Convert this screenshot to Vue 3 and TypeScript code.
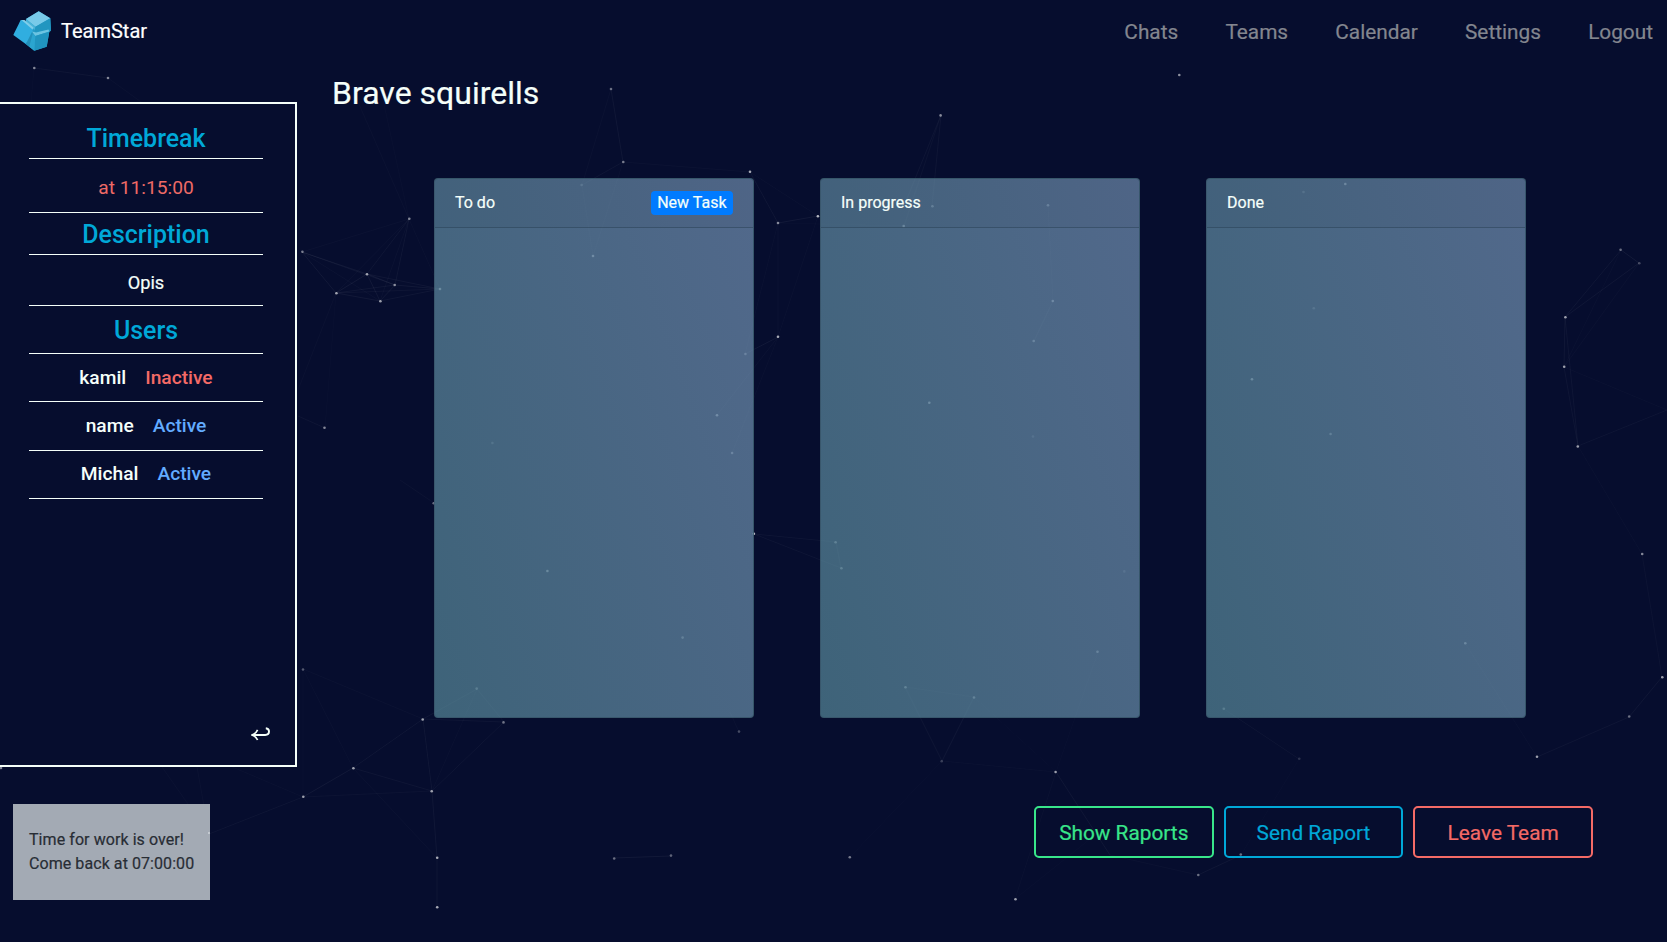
<script setup lang="ts">
interface Dot { x: number; y: number; o: number }
interface Member { name: string; status: 'Active' | 'Inactive' }

const links: string[] = ['Chats', 'Teams', 'Calendar', 'Settings', 'Logout']
const members: Member[] = [
  { name: 'kamil', status: 'Inactive' },
  { name: 'name', status: 'Active' },
  { name: 'Michal', status: 'Active' },
]
const columns = [
  { title: 'To do', canAdd: true },
  { title: 'In progress', canAdd: false },
  { title: 'Done', canAdd: false },
]

// Particle field: x, y, opacity
const dots: Dot[] = ([
  [34.3, 68, .5], [108, 78, .5], [303, 669.5, .3], [303.3, 796.7, .6], [1, 768, .5],
  [1179.3, 75, .55], [1048, 205.3, .4], [1345.3, 184, .5], [1303.5, 192, .2], [611, 89, .4], [623.3, 162, .45],
  [750, 171.7, .65], [409.3, 218.7, .5], [302.4, 251.7, .45], [367, 274.2, .6], [394.7, 285, .5], [336.4, 293.2, .6],
  [380.4, 301.2, .6], [440, 289, .5], [593, 256, .5], [581.6, 185, .25], [778, 223, .5], [778, 336.7, .65],
  [940.6, 115.4, .5], [817.9, 216.3, .7], [932.4, 206.3, .4], [903.7, 226, .5], [1052.8, 301, .45], [1033.7, 341, .4],
  [745.4, 354, .35], [717, 415.3, .5], [732.1, 453, .4], [492.4, 443, .2], [433.7, 503.3, .4], [753.9, 533.7, .7],
  [835.6, 542.2, .4], [841.4, 568.3, .4], [547.4, 571, .5], [682.6, 637.6, .35], [476.7, 688.6, .35], [422.7, 719.5, .6],
  [503.5, 722.4, .4], [353.4, 768.2, .6], [431.7, 791.2, .6], [437.2, 857.7, .65], [437.2, 907.2, .65], [614.2, 858.5, .4],
  [671, 855.6, .35], [849.8, 857.2, .45], [739, 731.6, .25], [941.7, 761.3, .2], [905.5, 687.2, .4], [974, 697.5, .4],
  [1055.6, 772, .6], [1198.3, 875, .4], [1240.8, 854.5, .4], [1015.5, 899.3, .6], [1299.3, 758.8, .15], [1537, 756.7, .6],
  [1629.2, 716.5, .4], [1223.8, 708.7, .35], [1620.6, 249.7, .4], [1639.3, 263.3, .25], [1565.4, 317.2, .6], [1564.2, 366.7, .6],
  [1577.8, 446.5, .6], [1642.2, 554, .5], [1662.3, 677.2, .6], [1313.8, 308.2, .2], [1252, 379.3, .5], [1330.6, 434, .35],
  [1465.3, 643.2, .45], [1124.3, 571.4, .15], [324.5, 427.7, .5], [929.3, 402.8, .5], [1097.5, 651.7, .4], [1033, 436.5, .15],
] as number[][]).map(([x, y, o]) => ({ x, y, o }))

// Links between nearby particles: x1, y1, x2, y2, opacity
const lines: number[][] = [
  [34, 68, 108, 78, .05], [108, 78, 155, 112, .03], [34, 68, 31, 102, .02],
  [611, 89, 623, 162, .06], [611, 89, 582, 185, .03], [623, 162, 582, 185, .05], [623, 162, 750, 172, .03], [623, 162, 593, 256, .03], [582, 185, 593, 256, .03],
  [750, 172, 778, 223, .06], [750, 172, 818, 216, .03], [778, 223, 818, 216, .07], [778, 223, 904, 226, .02],
  [778, 223, 778, 337, .03], [778, 223, 745, 354, .03], [818, 216, 778, 337, .03], [778, 337, 745, 354, .07], [778, 337, 717, 415, .04], [778, 337, 732, 453, .03],
  [409, 219, 355, 95, .03], [409, 219, 382, 95, .025], [409, 219, 302, 252, .03], [409, 219, 367, 274, .06], [409, 219, 395, 285, .06],
  [409, 219, 336, 293, .04], [409, 219, 380, 301, .04], [409, 219, 440, 289, .03],
  [302, 252, 367, 274, .07], [302, 252, 395, 285, .05], [302, 252, 336, 293, .07], [302, 252, 380, 301, .04],
  [367, 274, 336, 293, .08], [367, 274, 395, 285, .08], [367, 274, 380, 301, .07], [367, 274, 440, 289, .06],
  [395, 285, 336, 293, .06], [395, 285, 380, 301, .07], [395, 285, 440, 289, .07], [336, 293, 380, 301, .07],
  [336, 293, 440, 289, .05], [380, 301, 440, 289, .06], [336, 293, 298, 390, .03], [336, 293, 325, 428, .02],
  [298, 416, 325, 428, .05], [400, 480, 434, 503, .04],
  [941, 115, 904, 206, .05], [941, 115, 904, 226, .04], [941, 115, 932, 206, .05], [1048, 205, 1053, 301, .03], [1053, 301, 1034, 341, .06],
  [754, 534, 836, 542, .05], [754, 534, 841, 568, .05], [836, 542, 841, 568, .06],
  [303, 669, 423, 719, .03], [303, 669, 353, 768, .03], [303, 669, 303, 797, .025],
  [423, 719, 353, 768, .06], [423, 719, 432, 791, .06], [423, 719, 504, 722, .05], [423, 719, 477, 689, .06], [504, 722, 432, 791, .05], [504, 722, 477, 689, .05],
  [477, 689, 432, 791, .03], [353, 768, 303, 797, .07], [353, 768, 432, 791, .05], [303, 797, 432, 791, .04],
  [432, 791, 437, 858, .06], [353, 768, 437, 858, .03], [437, 858, 437, 907, .06],
  [303, 797, 209, 834, .05], [303, 797, 230, 766, .03], [162, 767, 209, 834, .03], [197, 767, 209, 834, .03],
  [614, 858, 671, 856, .07], [739, 732, 730, 712, .03], [905, 687, 942, 761, .05], [974, 697, 942, 761, .06], [905, 687, 974, 697, .03], [942, 761, 850, 857, .025], [942, 761, 1056, 772, .03],
  [1056, 772, 1098, 652, .025], [1056, 772, 974, 697, .02], [1056, 772, 1110, 855, .06], [1056, 772, 1015, 899, .03],
  [1110, 855, 1198, 875, .03], [1198, 875, 1241, 855, .06], [1015, 899, 1110, 823, .025], [1241, 855, 1299, 759, .025],
  [1224, 709, 1299, 759, .05], [1537, 757, 1629, 717, .05], [1537, 757, 1465, 643, .03], [1629, 717, 1662, 677, .06], [1662, 677, 1642, 554, .04],
  [1642, 554, 1578, 446, .03], [1578, 446, 1564, 367, .05], [1578, 446, 1565, 317, .05], [1565, 317, 1564, 367, .06],
  [1565, 317, 1621, 250, .06], [1565, 317, 1639, 263, .06], [1621, 250, 1639, 263, .08], [1564, 367, 1621, 250, .03], [1564, 367, 1639, 263, .03],
  [1564, 367, 1667, 410, .03], [1578, 446, 1667, 410, .05],
]
</script>

<template>
  <div class="page">
    <svg class="particles" width="1667" height="942" viewBox="0 0 1667 942">
      <g class="threads">
        <line v-for="(l, i) in lines" :key="i" :x1="l[0]" :y1="l[1]" :x2="l[2]" :y2="l[3]" stroke="#fff" :stroke-opacity="l[4]" />
      </g>
      <circle v-for="(d, i) in dots" :key="i" :cx="d.x" :cy="d.y" r="1.3" fill="#fff" :fill-opacity="d.o" />
    </svg>

    <header class="navbar">
      <a class="brand">
        <svg class="logo" width="38" height="40" viewBox="0 0 38 40">
          <polygon points="13,8 25.7,0.2 37.3,7.3 38,19.7 36.3,21 33.7,35.7 21.3,39.8 13,33.3 18,16" fill="#249bc7" />
          <polygon points="7.7,9 10.5,9 20.3,17.5 19,21 13,33.3 0.3,24" fill="#30aee0" />
          <polygon points="13,8 25.7,0.2 37.3,7.3 22.5,15.8" fill="#78cae9" />
          <polygon points="13,8 22.5,15.8 21.5,19 12.6,10.5" fill="#49b3d8" />
          <polygon points="8.5,9 11.5,9 20.5,16.5 19.5,18.5" fill="#7fcde9" />
          <polygon points="22.5,15.8 37.3,7.3 38,18.5 22,21" fill="#2196c0" />
          <polygon points="19,20.5 23,21.6 35.5,18.4 36.3,20.6 22.3,25" fill="#6cc4e2" />
          <polygon points="22.3,25 36.3,20.8 33.7,35.7 21.3,39.8" fill="#2094bf" />
          <polygon points="18.8,21.5 22.3,25 21.3,39.8 16.2,35.8" fill="#2ba5d0" />
          <polygon points="18.8,21.5 19.8,22.6 16.2,35.8 13,33.3" fill="#2390ba" />
        </svg>
        <span>TeamStar</span>
      </a>
      <nav class="links">
        <a v-for="l in links" :key="l">{{ l }}</a>
      </nav>
    </header>

    <div class="content">
      <aside class="sidebar">
        <div class="rows">
          <h4 class="row first">Timebreak</h4>
          <div class="row time">at 11:15:00</div>
          <h4 class="row description">Description</h4>
          <div class="row about">Opis</div>
          <h4 class="row users">Users</h4>
          <div v-for="m in members" :key="m.name" class="row member">
            <span>{{ m.name }}</span>
            <span :class="m.status.toLowerCase()">{{ m.status }}</span>
          </div>
        </div>
        <svg class="back" width="20" height="14" viewBox="0 0 20 14" fill="none" stroke="#f5fffa">
          <path d="M1.5 8H14.2C17 8 18 6.8 18 4.6C18 2.7 17 1.4 14.8 1.2" stroke-width="1.9" />
          <path d="M6.6 2.8C5.5 5.2 3.8 7 1 8C3.8 9 5.5 10.6 6.6 13" stroke-width="1.7" />
        </svg>
      </aside>

      <main class="main">
        <h2>Brave squirells</h2>
        <div class="board">
          <section v-for="c in columns" :key="c.title" class="card">
            <div class="card-header">
              <span>{{ c.title }}</span>
              <button v-if="c.canAdd" class="badge">New Task</button>
            </div>
          </section>
        </div>
      </main>
    </div>

    <footer class="bottom">
      <div class="notice">
        Time for work is over!<br />Come back at 07:00:00
        <i class="speck"></i>
      </div>
      <div class="actions">
        <button class="action show">Show Raports</button>
        <button class="action send">Send Raport</button>
        <button class="action leave">Leave Team</button>
      </div>
    </footer>
  </div>
</template>

<style>
body {
  margin: 0;
  background: #060d2e;
}
</style>

<style scoped>
.page {
  position: relative;
  box-sizing: border-box;
  width: 1667px;
  height: 942px;
  overflow: hidden;
  background: #060d2e;
  color: #f5fffa;
  font: 400 16px/24px Roboto, sans-serif;
  -webkit-text-stroke: .2px currentColor;
}
.page * { box-sizing: border-box; }
.particles { position: absolute; inset: 0; }
.threads { opacity: .7; }
.navbar, .content, .bottom { position: relative; }
.navbar {
  display: flex;
  justify-content: space-between;
  height: 62px;
  padding: 0 14px 0 13px;
}
.brand {
  display: flex;
  align-items: center;
  gap: 10px;
  color: #fff;
  font-size: 20px;
}
.logo { display: block; }
.links {
  display: flex;
  align-items: center;
  gap: 47.2px;
  padding-top: 1px;
  color: #83868f;
  font-size: 20.8px;
}
.content { display: flex; height: 705px; }
.sidebar {
  display: flex;
  flex-direction: column;
  justify-content: space-between;
  width: 297px;
  height: 665px;
  margin-top: 40px;
  padding: 0 24px 24px 29px;
  border: 2px solid #f5fffa;
  border-left: 0;
  background: #060d2e;
}
.rows { width: 234px; }
.row {
  height: 48px;
  margin: 0;
  border-bottom: 1px solid #f5fffa;
  font-size: 19.2px;
  line-height: 47px;
  text-align: center;
}
h4.row {
  color: #00a8d8;
  font-size: 24.96px;
  font-weight: 500;
  -webkit-text-stroke: 0;
}
h4.first { height: 55px; padding-top: 15px; line-height: 39px; }
.row.time { height: 54px; padding-top: 4px; line-height: 49px; color: #ee6a66; -webkit-text-stroke: 0; }
h4.description { height: 42px; padding-top: 2px; line-height: 39px; }
.row.about { height: 51px; padding-top: 5px; font-size: 18.2px; line-height: 45px; }
h4.users { padding-top: 1px; }
.member {
  display: flex;
  justify-content: center;
  gap: 19px;
  font-weight: 500;
  -webkit-text-stroke: 0;
}
.member:nth-child(7) { height: 49px; }
.member:nth-child(8) { line-height: 46px; }
.active { color: #62abff; }
.inactive { color: #f46a66; }
.back { align-self: flex-end; }
.main { flex: 1; padding-left: 35px; }
h2 {
  margin: 12px 0 0;
  font-size: 32px;
  font-weight: 400;
  line-height: 38px;
}
.board { display: flex; gap: 66px; margin: 66px 0 0 102px; }
.card {
  width: 320px;
  height: 540px;
  border: 1px solid rgba(53, 84, 103, .8);
  border-radius: 4px;
  background: linear-gradient(70deg, rgba(87, 137, 154, .7), rgba(115, 145, 180, .7));
}
.card-header {
  display: flex;
  justify-content: space-between;
  height: 49px;
  padding: 12px 20px;
  border-bottom: 1px solid rgba(40, 64, 84, .5);
  background: rgba(0, 0, 0, .03);
}
.badge {
  height: 24px;
  padding: 0 6.5px;
  border: 0;
  border-radius: 4px;
  background: #007bff;
  color: #f5fffa;
  font: inherit;
}
.bottom {
  display: flex;
  justify-content: space-between;
  align-items: flex-start;
  padding: 37px 74px 0 13px;
}
.notice {
  position: relative;
  width: 197px;
  height: 96px;
  padding: 24px 0 0 16px;
  background: #a3aab4;
  color: #282d34;
  letter-spacing: .07px;
}
.speck {
  position: absolute;
  top: 28px;
  right: 0;
  width: 2px;
  height: 2px;
  border-radius: 1px;
  background: #ced3da;
}
.actions { display: flex; gap: 10px; padding-top: 2px; }
.action {
  width: 179.7px;
  height: 52px;
  padding: 2px 0 0;
  border: 2px solid;
  border-radius: 5px;
  background: transparent;
  font: 400 20.8px/46px Roboto, sans-serif;
}
.show { color: #38e68a; }
.send { color: #00a8d8; }
.leave { color: #f46a66; }
</style>
